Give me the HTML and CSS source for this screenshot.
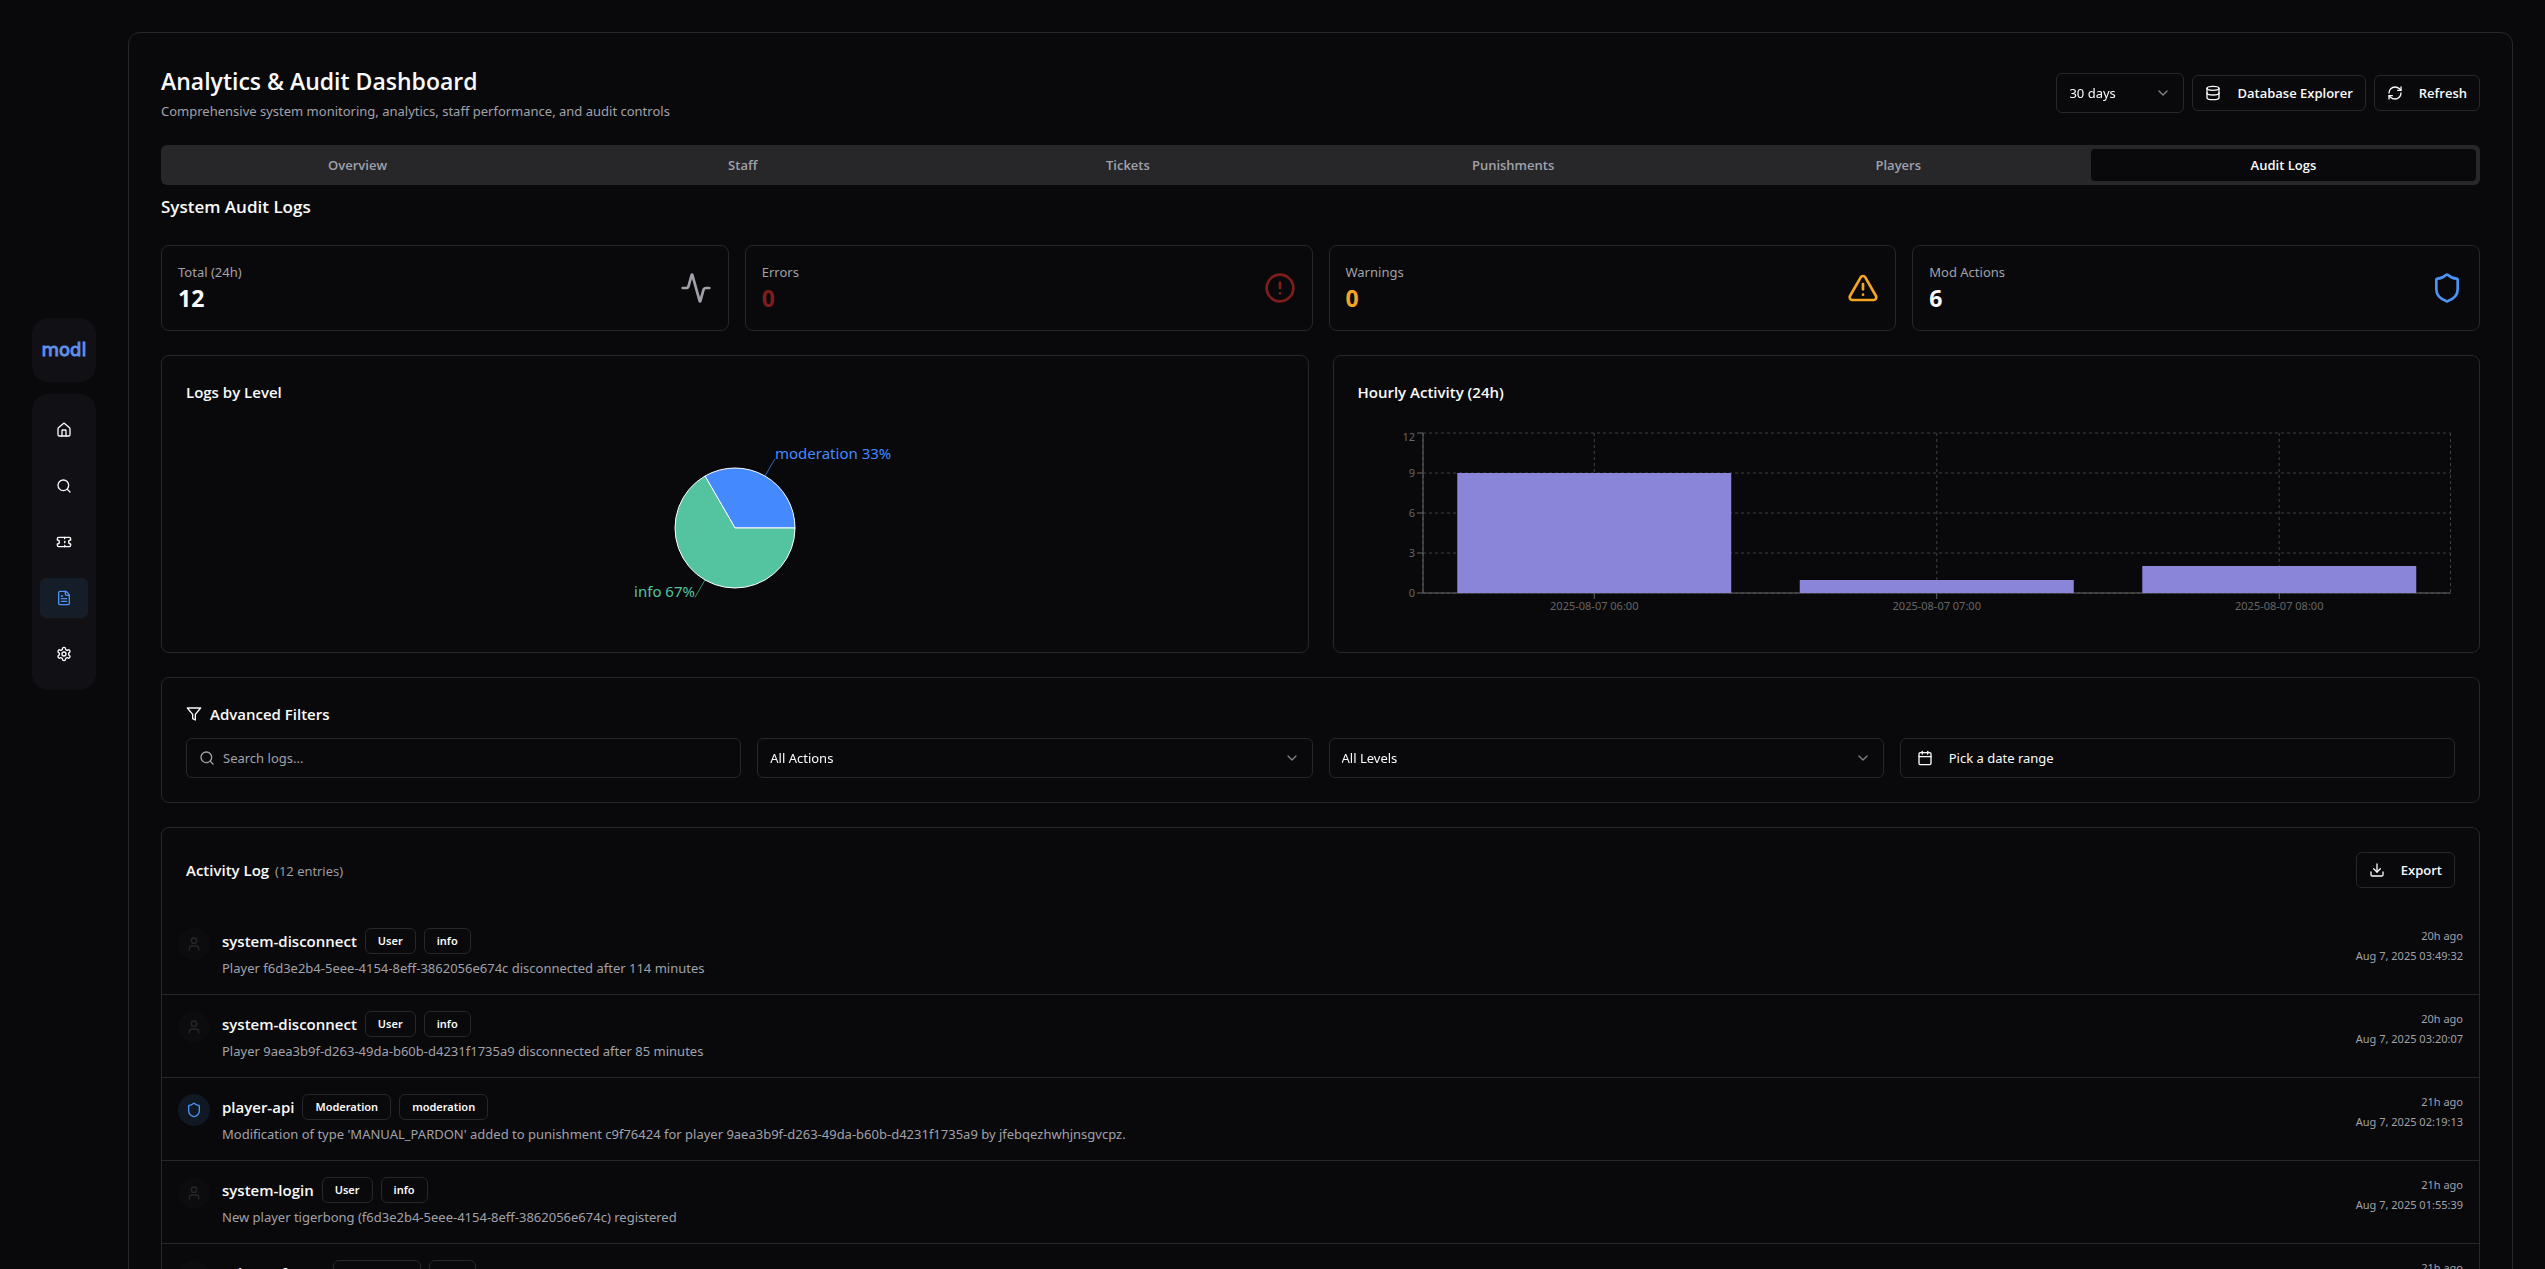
FILE: index.html
```html
<!DOCTYPE html>
<html lang="en">
<head>
<meta charset="utf-8">
<meta name="viewport" content="width=device-width, initial-scale=1">
<title>Analytics &amp; Audit Dashboard</title>
<link rel="stylesheet" href="styles.css">
</head>
<body>
<svg class="sprite" aria-hidden="true">
  <symbol id="i-home" viewBox="0 0 24 24"><path d="M15 21v-8a1 1 0 0 0-1-1h-4a1 1 0 0 0-1 1v8"/><path d="M3 10a2 2 0 0 1 .709-1.528l7-5.999a2 2 0 0 1 2.582 0l7 5.999A2 2 0 0 1 21 10v9a2 2 0 0 1-2 2H5a2 2 0 0 1-2-2z"/></symbol>
  <symbol id="i-search" viewBox="0 0 24 24"><circle cx="11" cy="11" r="8"/><path d="m21 21-4.3-4.3"/></symbol>
  <symbol id="i-ticket" viewBox="0 0 24 24"><path d="M2 9a3 3 0 0 1 0 6v2a2 2 0 0 0 2 2h16a2 2 0 0 0 2-2v-2a3 3 0 0 1 0-6V7a2 2 0 0 0-2-2H4a2 2 0 0 0-2 2Z"/><path d="M13 5v2"/><path d="M13 17v2"/><path d="M13 11v2"/></symbol>
  <symbol id="i-file" viewBox="0 0 24 24"><path d="M15 2H6a2 2 0 0 0-2 2v16a2 2 0 0 0 2 2h12a2 2 0 0 0 2-2V7Z"/><path d="M14 2v4a2 2 0 0 0 2 2h4"/><path d="M10 9H8"/><path d="M16 13H8"/><path d="M16 17H8"/></symbol>
  <symbol id="i-settings" viewBox="0 0 24 24"><path d="M12.22 2h-.44a2 2 0 0 0-2 2v.18a2 2 0 0 1-1 1.73l-.43.25a2 2 0 0 1-2 0l-.15-.08a2 2 0 0 0-2.73.73l-.22.38a2 2 0 0 0 .73 2.73l.15.1a2 2 0 0 1 1 1.72v.51a2 2 0 0 1-1 1.74l-.15.09a2 2 0 0 0-.73 2.73l.22.38a2 2 0 0 0 2.73.73l.15-.08a2 2 0 0 1 2 0l.43.25a2 2 0 0 1 1 1.73V20a2 2 0 0 0 2 2h.44a2 2 0 0 0 2-2v-.18a2 2 0 0 1 1-1.73l.43-.25a2 2 0 0 1 2 0l.15.08a2 2 0 0 0 2.73-.73l.22-.39a2 2 0 0 0-.73-2.73l-.15-.08a2 2 0 0 1-1-1.74v-.5a2 2 0 0 1 1-1.74l.15-.09a2 2 0 0 0 .73-2.73l-.22-.38a2 2 0 0 0-2.73-.73l-.15.08a2 2 0 0 1-2 0l-.43-.25a2 2 0 0 1-1-1.73V4a2 2 0 0 0-2-2z"/><circle cx="12" cy="12" r="3"/></symbol>
  <symbol id="i-chevron" viewBox="0 0 24 24"><path d="m6 9 6 6 6-6"/></symbol>
  <symbol id="i-database" viewBox="0 0 24 24"><ellipse cx="12" cy="5" rx="9" ry="3"/><path d="M3 5V19A9 3 0 0 0 21 19V5"/><path d="M3 12A9 3 0 0 0 21 12"/></symbol>
  <symbol id="i-refresh" viewBox="0 0 24 24"><path d="M3 12a9 9 0 0 1 9-9 9.750 9.750 0 0 1 6.740 2.740L21 8"/><path d="M21 3v5h-5"/><path d="M21 12a9 9 0 0 1-9 9 9.750 9.750 0 0 1-6.740-2.740L3 16"/><path d="M8 16H3v5"/></symbol>
  <symbol id="i-activity" viewBox="0 0 24 24"><path d="M22 12h-2.480a2 2 0 0 0-1.930 1.460l-2.350 8.360a.25.25 0 0 1-.48 0L9.240 2.180a.25.25 0 0 0-.48 0l-2.350 8.360A2 2 0 0 1 4.490 12H2"/></symbol>
  <symbol id="i-alert" viewBox="0 0 24 24"><circle cx="12" cy="12" r="10"/><path d="M12 8v4"/><path d="M12 16h.01"/></symbol>
  <symbol id="i-warning" viewBox="0 0 24 24"><path d="m21.730 18-8-14a2 2 0 0 0-3.480 0l-8 14A2 2 0 0 0 4 21h16a2 2 0 0 0 1.730-3"/><path d="M12 9v4"/><path d="M12 17h.01"/></symbol>
  <symbol id="i-shield" viewBox="0 0 24 24"><path d="M20 13c0 5-3.500 7.500-7.660 8.950a1 1 0 0 1-.67-.01C7.500 20.500 4 18 4 13V6a1 1 0 0 1 1-1c2 0 4.500-1.200 6.240-2.720a1.170 1.170 0 0 1 1.520 0C14.510 3.810 17 5 19 5a1 1 0 0 1 1 1z"/></symbol>
  <symbol id="i-filter" viewBox="0 0 24 24"><path d="M22 3H2l8 9.460V19l4 2v-8.540z"/></symbol>
  <symbol id="i-calendar" viewBox="0 0 24 24"><path d="M8 2v4"/><path d="M16 2v4"/><rect width="18" height="18" x="3" y="4" rx="2"/><path d="M3 10h18"/></symbol>
  <symbol id="i-download" viewBox="0 0 24 24"><path d="M21 15v4a2 2 0 0 1-2 2H5a2 2 0 0 1-2-2v-4"/><path d="m7 10 5 5 5-5"/><path d="M12 15V3"/></symbol>
  <symbol id="i-user" viewBox="0 0 24 24"><path d="M19 21v-2a4 4 0 0 0-4-4H9a4 4 0 0 0-4 4v2"/><circle cx="12" cy="7" r="4"/></symbol>
</svg>

<div class="app">
  <aside class="sidebar">
    <a class="logo" href="#">modl</a>
    <nav class="nav" aria-label="Main">
      <a class="nav-item" href="#" aria-label="Home"><svg class="icon"><use href="#i-home"/></svg></a>
      <a class="nav-item" href="#" aria-label="Lookup"><svg class="icon"><use href="#i-search"/></svg></a>
      <a class="nav-item" href="#" aria-label="Tickets"><svg class="icon"><use href="#i-ticket"/></svg></a>
      <a class="nav-item active" href="#" aria-label="Audit"><svg class="icon"><use href="#i-file"/></svg></a>
      <a class="nav-item" href="#" aria-label="Settings"><svg class="icon"><use href="#i-settings"/></svg></a>
    </nav>
  </aside>

  <main class="panel">
    <header class="page-head">
      <div>
        <h1>Analytics &amp; Audit Dashboard</h1>
        <p class="subtitle">Comprehensive system monitoring, analytics, staff performance, and audit controls</p>
      </div>
      <div class="actions">
        <div class="select period">
          <select aria-label="Period"><option>30 days</option></select>
          <svg class="icon chevron"><use href="#i-chevron"/></svg>
        </div>
        <button class="btn" type="button"><svg class="icon"><use href="#i-database"/></svg>Database Explorer</button>
        <button class="btn" type="button"><svg class="icon"><use href="#i-refresh"/></svg>Refresh</button>
      </div>
    </header>

    <div class="tabs" role="tablist">
      <button class="tab" type="button" role="tab">Overview</button>
      <button class="tab" type="button" role="tab">Staff</button>
      <button class="tab" type="button" role="tab">Tickets</button>
      <button class="tab" type="button" role="tab">Punishments</button>
      <button class="tab" type="button" role="tab">Players</button>
      <button class="tab active" type="button" role="tab" aria-selected="true">Audit Logs</button>
    </div>

    <div class="content">
      <h2>System Audit Logs</h2>

      <section class="stats">
        <div class="card stat"><div><p class="label">Total (24h)</p><p class="value">12</p></div><svg class="icon big muted"><use href="#i-activity"/></svg></div>
        <div class="card stat"><div><p class="label">Errors</p><p class="value red">0</p></div><svg class="icon big red"><use href="#i-alert"/></svg></div>
        <div class="card stat"><div><p class="label">Warnings</p><p class="value amber">0</p></div><svg class="icon big amber"><use href="#i-warning"/></svg></div>
        <div class="card stat"><div><p class="label">Mod Actions</p><p class="value">6</p></div><svg class="icon big blue"><use href="#i-shield"/></svg></div>
      </section>

      <section class="charts">
        <div class="card chart-card">
          <h3>Logs by Level</h3>
          <svg class="pie" viewBox="0 0 320 200" role="img" aria-label="Logs by level">
            <path class="slice mod" d="M160 100H220A60 60 0 0 0 130 48.040Z"/>
            <path class="slice info" d="M160 100L130 48.040A60 60 0 1 0 220 100Z"/>
            <path class="lead-mod" d="M190 48.040L200 30.720"/>
            <path class="lead-info" d="M130 151.960L120 169.280"/>
            <text class="text-mod" x="200" y="31">moderation 33%</text>
            <text class="text-info" x="120" y="169" text-anchor="end">info 67%</text>
          </svg>
        </div>
        <div class="card chart-card">
          <h3>Hourly Activity (24h)</h3>
          <div class="bars">
            <svg class="plot" role="img" aria-label="Hourly activity">
              <g class="grid">
                <line x1="0" x2="100%" y1="0" y2="0"/><line x1="0" x2="100%" y1="40" y2="40"/><line x1="0" x2="100%" y1="80" y2="80"/><line x1="0" x2="100%" y1="120" y2="120"/><line x1="0" x2="100%" y1="160" y2="160"/>
                <line x1="0" x2="0" y1="0" y2="160"/><line x1="16.667%" x2="16.667%" y1="0" y2="160"/><line x1="50%" x2="50%" y1="0" y2="160"/><line x1="83.333%" x2="83.333%" y1="0" y2="160"/><line x1="100%" x2="100%" y1="0" y2="160"/>
              </g>
              <g class="axis">
                <line x1="0" x2="0" y1="0" y2="160"/><line x1="0" x2="100%" y1="160" y2="160"/>
                <line x1="-6" x2="0" y1="0" y2="0"/><line x1="-6" x2="0" y1="40" y2="40"/><line x1="-6" x2="0" y1="80" y2="80"/><line x1="-6" x2="0" y1="120" y2="120"/><line x1="-6" x2="0" y1="160" y2="160"/>
                <line x1="16.667%" x2="16.667%" y1="160" y2="166"/><line x1="50%" x2="50%" y1="160" y2="166"/><line x1="83.333%" x2="83.333%" y1="160" y2="166"/>
              </g>
              <g class="bar">
                <rect x="3.333%" y="40" width="26.667%" height="120"/>
                <rect x="36.667%" y="147" width="26.667%" height="13"/>
                <rect x="70%" y="133" width="26.667%" height="27"/>
              </g>
              <g class="tick y"><text x="-8" y="8">12</text><text x="-8" y="44">9</text><text x="-8" y="84">6</text><text x="-8" y="124">3</text><text x="-8" y="164">0</text></g>
              <g class="tick x"><text x="16.667%" y="177">2025-08-07 06:00</text><text x="50%" y="177">2025-08-07 07:00</text><text x="83.333%" y="177">2025-08-07 08:00</text></g>
            </svg>
          </div>
        </div>
      </section>

      <section class="card filters">
        <h3><svg class="icon"><use href="#i-filter"/></svg>Advanced Filters</h3>
        <div class="filter-grid">
          <div class="search"><svg class="icon"><use href="#i-search"/></svg><input type="text" placeholder="Search logs..." aria-label="Search logs"></div>
          <div class="select"><select aria-label="Action"><option>All Actions</option></select><svg class="icon chevron"><use href="#i-chevron"/></svg></div>
          <div class="select"><select aria-label="Level"><option>All Levels</option></select><svg class="icon chevron"><use href="#i-chevron"/></svg></div>
          <button class="btn date" type="button"><svg class="icon"><use href="#i-calendar"/></svg>Pick a date range</button>
        </div>
      </section>

      <section class="card log">
        <div class="log-head">
          <h3>Activity Log <span class="count">(12 entries)</span></h3>
          <button class="btn" type="button"><svg class="icon"><use href="#i-download"/></svg>Export</button>
        </div>
        <ul class="rows">
          <li class="row">
            <span class="avatar"><svg class="icon"><use href="#i-user"/></svg></span>
            <div class="entry"><div class="entry-head"><span class="name">system-disconnect</span><span class="badge">User</span><span class="badge">info</span></div><p>Player f6d3e2b4-5eee-4154-8eff-3862056e674c disconnected after 114 minutes</p></div>
            <div class="when"><span>20h ago</span><span>Aug 7, 2025 03:49:32</span></div>
          </li>
          <li class="row">
            <span class="avatar"><svg class="icon"><use href="#i-user"/></svg></span>
            <div class="entry"><div class="entry-head"><span class="name">system-disconnect</span><span class="badge">User</span><span class="badge">info</span></div><p>Player 9aea3b9f-d263-49da-b60b-d4231f1735a9 disconnected after 85 minutes</p></div>
            <div class="when"><span>20h ago</span><span>Aug 7, 2025 03:20:07</span></div>
          </li>
          <li class="row">
            <span class="avatar shield"><svg class="icon"><use href="#i-shield"/></svg></span>
            <div class="entry"><div class="entry-head"><span class="name">player-api</span><span class="badge">Moderation</span><span class="badge">moderation</span></div><p>Modification of type 'MANUAL_PARDON' added to punishment c9f76424 for player 9aea3b9f-d263-49da-b60b-d4231f1735a9 by jfebqezhwhjnsgvcpz.</p></div>
            <div class="when"><span>21h ago</span><span>Aug 7, 2025 02:19:13</span></div>
          </li>
          <li class="row">
            <span class="avatar"><svg class="icon"><use href="#i-user"/></svg></span>
            <div class="entry"><div class="entry-head"><span class="name">system-login</span><span class="badge">User</span><span class="badge">info</span></div><p>New player tigerbong (f6d3e2b4-5eee-4154-8eff-3862056e674c) registered</p></div>
            <div class="when"><span>21h ago</span><span>Aug 7, 2025 01:55:39</span></div>
          </li>
          <li class="row">
            <span class="avatar"><svg class="icon"><use href="#i-user"/></svg></span>
            <div class="entry"><div class="entry-head"><span class="name">rules-enforcer</span><span class="badge">Moderation</span><span class="badge">info</span></div></div>
            <div class="when"><span>21h ago</span></div>
          </li>
        </ul>
      </section>
    </div>
  </main>
</div>
</body>
</html>
```
FILE: styles.css
```css
:root {
  --bg: #09090b;
  --border: #27272a;
  --muted: #a1a1aa;
  --text: #fafafa;
  --blue: #4c93f5;
  --red: #7f1d1d;
  --amber: #f5a524;
  --font-text: "Noto Sans", "Open Sans", sans-serif;
  --font-strong: "Open Sans", "Noto Sans", sans-serif;
}

* { box-sizing: border-box; margin: 0; padding: 0; }

body {
  background: var(--bg);
  color: var(--text);
  font-family: var(--font-text);
  font-size: 13px;
  line-height: 20px;
}

button, input, select { font: inherit; color: inherit; background: none; border: 0; }
a { color: inherit; text-decoration: none; }
ul { list-style: none; }

.sprite { display: none; }

.icon {
  width: 16px;
  height: 16px;
  flex: none;
  fill: none;
  stroke: currentColor;
  stroke-width: 2;
  stroke-linecap: round;
  stroke-linejoin: round;
}
.icon.big { width: 32px; height: 32px; }

.muted { color: var(--muted); }
.red { color: var(--red); }
.amber { color: var(--amber); }
.blue { color: var(--blue); }

.app {
  display: flex;
  height: 100vh;
  padding: 32px 32px 0;
  gap: 32px;
  overflow-y: auto;
  scrollbar-width: none;
}

/* Sidebar */
.sidebar {
  position: sticky;
  top: 0;
  flex: none;
  width: 64px;
  display: flex;
  flex-direction: column;
  gap: 12px;
  padding-top: 286px;
}
.logo {
  display: flex;
  align-items: center;
  justify-content: center;
  height: 64px;
  border-radius: 16px;
  background: #111115;
  color: #5f8fe8;
  font-family: "DejaVu Sans", sans-serif;
  font-size: 18px;
  -webkit-text-stroke: 1px #5f8fe8;
}
.nav {
  display: flex;
  flex-direction: column;
  gap: 16px;
  padding: 16px 8px;
  border-radius: 16px;
  background: #111115;
}
.nav-item {
  display: flex;
  align-items: center;
  justify-content: center;
  height: 40px;
  border-radius: 6px;
}
.nav-item.active { background: #151d29; color: var(--blue); }

/* Main panel */
.panel {
  flex: 1;
  min-width: 0;
  height: max-content;
  padding: 32px;
  border: 1px solid var(--border);
  border-radius: 12px;
}
.page-head {
  display: flex;
  justify-content: space-between;
  align-items: center;
  margin-bottom: 24px;
}
h1, h2, h3, .btn, .tab, .value, .name { font-family: var(--font-strong); }
h1 { font-size: 23px; line-height: 32px; font-weight: 600; margin-bottom: 4px; }
h2 { font-size: 17px; line-height: 28px; font-weight: 600; }
h3 { font-size: 15px; line-height: 24px; font-weight: 600; }
.subtitle { color: var(--muted); }

.actions { display: flex; align-items: center; gap: 8px; }
.btn {
  display: flex;
  align-items: center;
  gap: 16px;
  height: 36px;
  padding: 0 12px;
  border: 1px solid var(--border);
  border-radius: 6px;
  font-weight: 600;
  white-space: nowrap;
}
.select { position: relative; }
.select select {
  display: block;
  width: 100%;
  height: 40px;
  padding: 0 12px;
  border: 1px solid var(--border);
  border-radius: 6px;
  appearance: none;
}
.select.period { width: 128px; }
.chevron {
  position: absolute;
  right: 13px;
  top: 12px;
  opacity: .5;
  pointer-events: none;
}

.tabs {
  display: grid;
  grid-template-columns: repeat(6, 1fr);
  padding: 4px;
  margin-bottom: 8px;
  border-radius: 6px;
  background: #27272a;
}
.tab {
  height: 32px;
  border-radius: 4px;
  color: var(--muted);
  font-weight: 600;
}
.tab.active { background: var(--bg); color: var(--text); }

.content { display: flex; flex-direction: column; gap: 24px; }
.card { border: 1px solid var(--border); border-radius: 8px; }

.stats { display: grid; grid-template-columns: repeat(4, 1fr); gap: 16px; }
.stat {
  display: flex;
  justify-content: space-between;
  align-items: center;
  padding: 16px;
}
.label { color: var(--muted); }
.value { font-size: 23px; line-height: 32px; font-weight: 700; }

/* Charts */
.charts { display: grid; grid-template-columns: repeat(2, 1fr); gap: 24px; }
.chart-card {
  display: flex;
  flex-direction: column;
  gap: 24px;
  padding: 24px;
}
.pie { align-self: center; width: 320px; height: 200px; }
.pie text { font-size: 15px; }
.slice { stroke: #fff; }
.mod { fill: #4589ff; }
.info { fill: #54c3a0; }
.lead-mod { stroke: #4589ff; opacity: .7; }
.lead-info { stroke: #54c3a0; opacity: .7; }
.text-mod { fill: #4589ff; }
.text-info { fill: #54c3a0; }

.bars { height: 200px; padding: 5px 5px 0 65px; }
.plot { display: block; width: 100%; height: 160px; overflow: visible; }
.grid line { stroke: #404043; stroke-dasharray: 3 3; }
.axis line { stroke: #666; }
.bar rect { fill: #8a85d9; }
.tick text { fill: #666; font-size: 11px; }
.tick.y text { text-anchor: end; }
.tick.x text { text-anchor: middle; }

/* Filters */
.filters { padding: 24px; }
.filters h3 { display: flex; align-items: center; gap: 8px; margin-bottom: 12px; }
.filter-grid { display: grid; grid-template-columns: repeat(4, 1fr); gap: 16px; }
.search {
  display: flex;
  align-items: center;
  gap: 8px;
  height: 40px;
  padding: 0 12px;
  border: 1px solid var(--border);
  border-radius: 6px;
  color: var(--muted);
}
.search input { flex: 1; min-width: 0; outline: 0; }
.search input::placeholder { color: var(--muted); }
.btn.date { height: 40px; padding: 0 16px; font-family: var(--font-text); font-weight: 400; }

/* Activity log */
.log-head {
  display: flex;
  justify-content: space-between;
  align-items: center;
  padding: 24px;
}
.count { margin-left: 2px; font-size: 13px; font-weight: 400; color: var(--muted); }
.row {
  display: flex;
  gap: 12px;
  padding: 16px;
  border-bottom: 1px solid var(--border);
}
.row:last-child { border-bottom: 0; }
.avatar {
  display: flex;
  align-items: center;
  justify-content: center;
  flex: none;
  width: 32px;
  height: 32px;
  border-radius: 50%;
  background: #0c0c0e;
  color: #27272a;
}
.avatar.shield { background: #101823; color: var(--blue); }
.entry { flex: 1; min-width: 0; }
.entry p { color: var(--muted); }
.entry-head { display: flex; align-items: center; gap: 8px; margin-bottom: 4px; }
.name { font-size: 15px; line-height: 24px; font-weight: 600; }
.badge {
  padding: 2px 12px;
  border: 1px solid var(--border);
  border-radius: 6px;
  font-size: 11px;
  font-weight: 600;
}
.when {
  display: flex;
  flex-direction: column;
  align-items: flex-end;
  gap: 4px;
  color: var(--muted);
  font-size: 11px;
  line-height: 16px;
}
```
